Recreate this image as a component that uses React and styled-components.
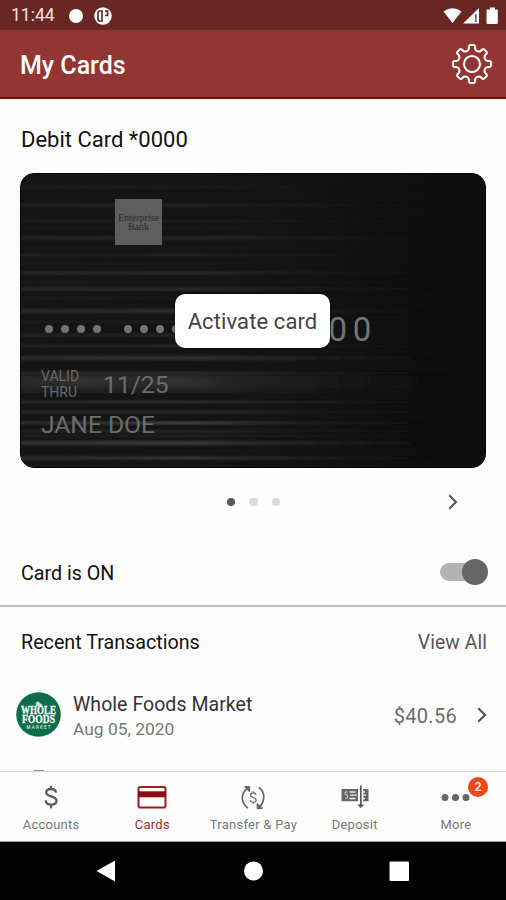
import React from 'react';
import styled, { createGlobalStyle } from 'styled-components';

const GlobalStyle = createGlobalStyle`
  * {
    box-sizing: border-box;
  }

  body {
    margin: 0;
    background: #fff;
    font-family: Roboto, 'Liberation Sans', sans-serif;
  }
`;

const Screen = styled.div`
  display: flex;
  flex-direction: column;
  width: 506px;
  height: 900px;
  overflow: hidden;
  background: #fefefe;
`;

const Text = styled.span`
  color: ${({ $color }) => $color || '#111'};
  font-size: ${({ $size }) => $size}px;
  font-weight: ${({ $weight }) => $weight || 400};
  letter-spacing: ${({ $spacing }) => $spacing || 0}px;
  line-height: 1.2;
  white-space: nowrap;
`;

const StatusBar = styled.div`
  display: flex;
  justify-content: space-between;
  align-items: center;
  height: 30px;
  padding: 1px 7px 0 11px;
  background: #692724;
`;

const StatusGroup = styled.div`
  display: flex;
  align-items: center;
  gap: 13px;
`;

const Header = styled.header`
  display: flex;
  justify-content: space-between;
  align-items: center;
  height: 69px;
  padding: 1px 13px 0 20px;
  background: #933532;
  border-bottom: 2px solid #7f0c0a;
`;

const PageTitle = styled.h1`
  margin: 4px 0 0;
  color: #fff;
  font-size: 25px;
  font-weight: 500;
  line-height: 30px;
`;

const Content = styled.main`
  height: 672px;
  overflow: hidden;
`;

const CardTitle = styled.div`
  display: flex;
  align-items: center;
  height: 75px;
  padding: 7px 21px 0;
`;

const BankCard = styled.div`
  position: relative;
  width: 466px;
  height: 295px;
  margin: -1px 0 1px 20px;
  border: 1px solid #030303;
  border-radius: 14px;
  background: #100f10;
  overflow: hidden;
`;

const Texture = styled.svg`
  position: absolute;
  inset: 0;
`;

const CardFace = styled.div`
  position: relative;
  display: flex;
  flex-direction: column;
  height: 100%;
  padding: 25px 20px 0;
`;

const BankLogo = styled.div`
  display: flex;
  justify-content: center;
  align-items: center;
  width: 47px;
  height: 46px;
  margin-left: 74px;
  background: #5e5e5e;
  color: #2c2c2c;
  font-family: 'Liberation Serif', serif;
  font-size: 10px;
  line-height: 9px;
  text-align: center;
`;

const CardNumber = styled.div`
  display: flex;
  align-items: center;
  height: 40px;
  margin-top: 64px;
  padding-left: 4px;
`;

const DotGroup = styled.div`
  display: flex;
  gap: 8px;
  width: 78.5px;
  padding-bottom: 1px;
`;

const Dot = styled.i`
  width: 8px;
  height: 8px;
  border-radius: 50%;
  background: #747474;
`;

const Digits = styled.span`
  color: #747474;
  font-size: 33px;
  letter-spacing: 5.5px;
`;

const ValidRow = styled.div`
  display: flex;
  align-items: center;
  gap: 24px;
  height: 32px;
  margin-top: 19px;
`;

const ValidLabel = styled.div`
  color: #6a6a6a;
  font-size: 14px;
  line-height: 16px;
`;

const Expiry = styled.div`
  margin-top: 2px;
  color: #6c6c6c;
  font-size: 24.6px;
  line-height: 30px;
`;

const Holder = styled.div`
  margin-top: 11px;
  color: #6c6c6c;
  font-size: 24.6px;
  line-height: 28px;
`;

const ActivateButton = styled.button`
  position: absolute;
  top: 120px;
  left: 154px;
  width: 155px;
  height: 54px;
  padding: 0;
  border: 0;
  border-radius: 10px;
  background: #fff;
  box-shadow: 0 0 2px #000;
  color: #444;
  font-family: inherit;
  font-size: 22px;
  letter-spacing: 0.1px;
  white-space: nowrap;
`;

const Pager = styled.div`
  display: grid;
  grid-template-columns: 1fr auto 1fr;
  align-items: center;
  height: 66px;
  padding: 0 48px 0 49px;

  > svg {
    grid-column: 3;
    justify-self: end;
  }
`;

const PagerDots = styled.div`
  display: flex;
  grid-column: 2;
  gap: 14px;
`;

const PagerDot = styled.i`
  width: 8.5px;
  height: 8.5px;
  border-radius: 50%;
  background: ${({ $active }) => ($active ? '#5a5a5a' : '#dcdcdc')};
`;

const SwitchRow = styled.div`
  display: flex;
  justify-content: space-between;
  align-items: center;
  height: 72px;
  padding: 7px 18px 0 21px;
  border-bottom: 2px solid #bcbcbc;
`;

const Switch = styled.div`
  display: flex;
  justify-content: flex-end;
  align-items: center;
  width: 48px;
  height: 18px;
  margin-top: -3px;
  border-radius: 9px;
  background: linear-gradient(90deg, #b3b3b3 40px, transparent 40px);
`;

const Thumb = styled.i`
  width: 26px;
  height: 26px;
  border-radius: 50%;
  background: #656565;
`;

const SectionHeader = styled.div`
  display: flex;
  justify-content: space-between;
  align-items: center;
  height: 70px;
  padding: 1px 19px 0 21px;
`;

const Transaction = styled.div`
  display: flex;
  align-items: center;
  height: 75px;
  padding: 0 19px 0 16px;
`;

const TransactionInfo = styled.div`
  display: flex;
  flex: 1;
  flex-direction: column;
  gap: 3px;
  margin: 4px 0 0 12px;
`;

const Amount = styled.span`
  margin: 2px 20px 0 0;
  color: #6a6a6a;
  font-size: 20px;
  letter-spacing: 0.3px;
`;

const NextTransaction = styled.div`
  width: 12px;
  height: 20px;
  margin: 18px 0 0 33px;
  border-radius: 2px 2px 0 0;
  background: #999;
`;

const TabBar = styled.nav`
  display: grid;
  grid-template-columns: repeat(5, 1fr);
  height: 71px;
  border-top: 1px solid #d4d4d4;
  border-bottom: 1px solid #999;
`;

const Tab = styled.div`
  position: relative;
  display: flex;
  flex-direction: column;
  align-items: center;
  gap: 2px;
  padding: 9px 0 0 1px;
`;

const Badge = styled.span`
  position: absolute;
  top: 5px;
  right: 18px;
  width: 20px;
  height: 20px;
  border-radius: 50%;
  background: #fa4616;
  color: #fff;
  font-size: 12.5px;
  font-weight: 500;
  line-height: 20px;
  text-align: center;
`;

const SystemBar = styled.div`
  display: flex;
  justify-content: center;
  height: 58px;
  background: #000;
`;

// y position, thickness, opacity
const streaks = [
  [13, 3, 0.18], [31, 3, 0.35], [47, 2, 0.22], [54, 2, 0.12], [64, 4, 0.42],
  [74, 2, 0.15], [81, 2, 0.42], [90, 2, 0.2], [99, 3, 0.55], [108, 2, 0.2],
  [115, 3, 0.65], [124, 2, 0.2], [137, 4, 0.65], [148, 2, 0.25], [161, 3, 0.4],
  [172, 2, 0.6], [184, 4, 0.75], [199, 2, 0.8], [208, 14, 0.5], [217, 3, 0.4],
  [228, 2, 0.9], [238, 3, 0.65], [249, 3, 0.9], [257, 2, 0.6], [262, 2, 0.35],
  [269, 4, 0.9], [284, 3, 0.9],
];

const CardTexture = () => (
  <Texture width="464" height="293" viewBox="0 0 464 293">
    <defs>
      <linearGradient id="base">
        <stop offset="0" stopColor="#151515" />
        <stop offset=".45" stopColor="#141414" />
        <stop offset=".9" stopColor="#100f10" />
      </linearGradient>
      <linearGradient id="streak">
        <stop offset="0" stopColor="#353737" />
        <stop offset=".38" stopColor="#3c3d3d" />
        <stop offset=".65" stopColor="#282828" stopOpacity=".6" />
        <stop offset=".95" stopColor="#111" stopOpacity="0" />
      </linearGradient>
      <radialGradient id="glow">
        <stop offset="0" stopColor="#505354" stopOpacity=".8" />
        <stop offset="1" stopColor="#303030" stopOpacity="0" />
      </radialGradient>
      <filter id="soft" x="-5%" y="-100%" width="110%" height="300%">
        <feGaussianBlur stdDeviation="0 .8" />
      </filter>
    </defs>
    <rect width="464" height="293" fill="url(#base)" />
    {streaks.map(([y, h, opacity]) => (
      <rect
        key={y}
        x="0"
        y={y - h / 2}
        width="464"
        height={h}
        opacity={opacity}
        fill="url(#streak)"
        filter="url(#soft)"
      />
    ))}
    <ellipse cx="60" cy="207" rx="80" ry="10" fill="url(#glow)" opacity=".4" />
    <ellipse cx="158" cy="208" rx="50" ry="9" fill="url(#glow)" opacity=".4" />
    <ellipse cx="160" cy="249" rx="120" ry="3" fill="url(#glow)" opacity=".6" />
  </Texture>
);

const Chevron = ({ width = 10, height = 16 }) => (
  <svg width={width} height={height} viewBox="0 0 10 16" fill="none" stroke="#555" strokeWidth="2.1">
    <path d="M1.2 1.2 8 8l-6.8 6.8" />
  </svg>
);

const GearIcon = () => {
  const teeth = [0, 45, 90, 135, 180, 225, 270, 315];
  const point = (angle, r) => {
    const rad = ((angle - 90) * Math.PI) / 180;
    return `${(21 + r * Math.cos(rad)).toFixed(2)} ${(21 + r * Math.sin(rad)).toFixed(2)}`;
  };
  const d = teeth
    .map((a, i) => `${i ? 'L' : 'M'}${point(a - 12, 15.3)}L${point(a - 9.5, 18)}Q${point(a - 9, 19)} ${point(a - 5, 19)}L${point(a + 5, 19)}Q${point(a + 9, 19)} ${point(a + 9.5, 18)}L${point(a + 12, 15.3)}Q${point(a + 22.5, 12.7)} ${point(a + 33, 15.3)}`)
    .join('');
  return (
    <svg width="42" height="42" viewBox="0 0 42 42" fill="none" stroke="#fff" strokeWidth="2.1" strokeLinejoin="round">
      <path d={`${d}Z`} />
      <circle cx="21" cy="21" r="8" />
    </svg>
  );
};

const NotificationIcons = () => (
  <svg width="45" height="20" viewBox="0 0 45 20">
    <circle cx="8" cy="10" r="7" fill="#fff" />
    <circle cx="35" cy="10" r="8.7" fill="#fff" />
    <path d="M34 5h-2.200q-1.800 0-1.800 1.800v6.400q0 1.800 1.800 1.800H34ZM37 5.200h2.600v4.300H37" fill="none" stroke="#692724" strokeWidth="1.700" />
  </svg>
);

const StatusIcons = () => (
  <svg width="56" height="18" viewBox="0 0 56 18" fill="#fff">
    <path d="M.5 4.500Q9.500-2 18.500 4.500L9.500 16Z" />
    <path d="M20 16.500 36 1v15.500Z" />
    <path d="M32.200 7.200h1.300v7.800h-1.300Z" fill="#692724" />
    <path d="M44 2.500h3V.5h5v2h2q.8 0 .8.800V16q0 1-1 1H44.500q-1 0-1-1V3.300q0-.8.500-.8Z" />
  </svg>
);

const MerchantLogo = () => (
  <svg width="45" height="45" viewBox="0 0 45 45">
    <circle cx="22.500" cy="22.500" r="22.300" fill="#0b6d49" />
    <path d="M20 13.500q-1-4 2-4l5 4q-3 2-7 0" fill="#c7ddd2" />
    <g fill="#fff" stroke="#fff" strokeWidth=".3" fontFamily="'Liberation Serif', serif" fontWeight="700" textAnchor="middle">
      <text x="22.500" y="22" fontSize="11.500" textLength="35" lengthAdjust="spacingAndGlyphs">WHOLE</text>
      <text x="22.500" y="31" fontSize="11.500" textLength="33" lengthAdjust="spacingAndGlyphs">FOODS</text>
      <text x="22.500" y="36.500" fontSize="4.500" strokeWidth="0" fontFamily="Roboto, sans-serif" fontWeight="400" textLength="24">MARKET</text>
    </g>
  </svg>
);

const AccountsIcon = () => (
  <svg width="34" height="34" viewBox="0 0 34 34" fill="none" stroke="#5c5c5c" strokeWidth="2.300">
    <path d="M22 11.700c-.2-2.400-2-3.700-4.900-3.700-3 0-4.900 1.400-4.900 3.600 0 5 10.300 2.700 10.300 8.200 0 2.300-2.100 3.800-5.200 3.800-3.200 0-5.400-1.600-5.500-4.400M17 4.700v3M17 24v3.200" />
  </svg>
);

const CardsIcon = () => (
  <svg width="34" height="34" viewBox="0 0 34 34">
    <rect x="3.500" y="6" width="27" height="20.500" rx="1.800" fill="none" stroke="#981c20" strokeWidth="2" />
    <path d="M3 10.300h28v6H3Z" fill="#8d0c12" />
  </svg>
);

const TransferIcon = () => (
  <svg width="34" height="34" viewBox="0 0 34 34" fill="none" stroke="#656565" strokeWidth="1.700">
    <path d="M12 27C5 22 4.500 13.500 10.500 8M23 6.500C29 11 29.500 19.500 23.500 26" />
    <path d="m8.500 5.500 5.300.2-.5 5ZM21 22.500l.3 5.500 5.400-.8Z" fill="#656565" strokeWidth="1" />
    <path d="M20 14c-.4-3-5.500-2.800-5.500 0 0 3.300 5.700 1.800 5.700 5 0 3-5.600 3-6 0M17.200 10.200V12M17.200 21v2" strokeWidth="1.200" />
  </svg>
);

const DepositIcon = () => (
  <svg width="34" height="34" viewBox="0 0 34 34">
    <path d="M3.500 8H20v12.300H3.500ZM25.200 8h5.300v12.300h-5.300Z" fill="#656565" />
    <path d="M11.500 11h6M12 14.200h7M11.500 17.500h6M25 14.100h3M25 11h2M25 17.500h2" stroke="#eee" strokeWidth="1.300" />
    <path d="M9.600 11H7.200v2.800h2.400V17H7" fill="none" stroke="#ccc" strokeWidth="1" />
    <path d="M22.800 4.500v20" stroke="#555" strokeWidth="1.700" />
    <path d="M19.200 23.500h7.200L22.800 27Z" fill="#555" />
  </svg>
);

const MoreIcon = () => (
  <svg width="34" height="34" viewBox="0 0 34 34" fill="#656565">
    <circle cx="6" cy="16.500" r="3.500" />
    <circle cx="16.500" cy="16.500" r="3.500" />
    <circle cx="27" cy="16.500" r="3.500" />
  </svg>
);

const tabs = [
  { label: 'Accounts', Icon: AccountsIcon },
  { label: 'Cards', Icon: CardsIcon, active: true },
  { label: 'Transfer & Pay', Icon: TransferIcon },
  { label: 'Deposit', Icon: DepositIcon },
  { label: 'More', Icon: MoreIcon, badge: 2 },
];

const DebitCard = () => (
  <BankCard>
    <CardTexture />
    <CardFace>
      <BankLogo>Enterprise<br />Bank</BankLogo>
      <CardNumber>
        {[0, 1, 2].map((group) => (
          <DotGroup key={group}>
            {[0, 1, 2, 3].map((dot) => <Dot key={dot} />)}
          </DotGroup>
        ))}
        <Digits>0000</Digits>
      </CardNumber>
      <ValidRow>
        <ValidLabel>VALID<br />THRU</ValidLabel>
        <Expiry>11/25</Expiry>
      </ValidRow>
      <Holder>JANE DOE</Holder>
    </CardFace>
    <ActivateButton>Activate card</ActivateButton>
  </BankCard>
);

const App = () => (
  <>
    <GlobalStyle />
    <Screen>
      <StatusBar>
        <StatusGroup>
          <Text $size={17.5} $color="#eee3e2">11:44</Text>
          <NotificationIcons />
        </StatusGroup>
        <StatusIcons />
      </StatusBar>
      <Header>
        <PageTitle>My Cards</PageTitle>
        <GearIcon />
      </Header>
      <Content>
        <CardTitle>
          <Text $size={22}>Debit Card *0000</Text>
        </CardTitle>
        <DebitCard />
        <Pager>
          <PagerDots>
            <PagerDot $active />
            <PagerDot />
            <PagerDot />
          </PagerDots>
          <Chevron />
        </Pager>
        <SwitchRow>
          <Text $size={19.7}>Card is ON</Text>
          <Switch>
            <Thumb />
          </Switch>
        </SwitchRow>
        <SectionHeader>
          <Text $size={19.7}>Recent Transactions</Text>
          <Text $size={19.3} $color="#555" $spacing={0.1}>View All</Text>
        </SectionHeader>
        <Transaction>
          <MerchantLogo />
          <TransactionInfo>
            <Text $size={19.5} $color="#333" $spacing={0.05}>Whole Foods Market</Text>
            <Text $size={17.4} $color="#777">Aug 05, 2020</Text>
          </TransactionInfo>
          <Amount>$40.56</Amount>
          <Chevron />
        </Transaction>
        <NextTransaction />
      </Content>
      <TabBar>
        {tabs.map(({ label, Icon, active, badge }) => (
          <Tab key={label}>
            <Icon />
            <Text $size={13} $color={active ? '#a52a30' : '#777'} $spacing={0.25}>{label}</Text>
            {badge && <Badge>{badge}</Badge>}
          </Tab>
        ))}
      </TabBar>
      <SystemBar>
        <svg width="506" height="58" viewBox="0 0 506 58" fill="#fff">
          <path d="M96.500 29 115 18.500v21Z" />
          <circle cx="253.500" cy="29" r="9.500" />
          <rect x="389.500" y="19.500" width="19.500" height="19.500" rx="1" />
        </svg>
      </SystemBar>
    </Screen>
  </>
);

export default App;
